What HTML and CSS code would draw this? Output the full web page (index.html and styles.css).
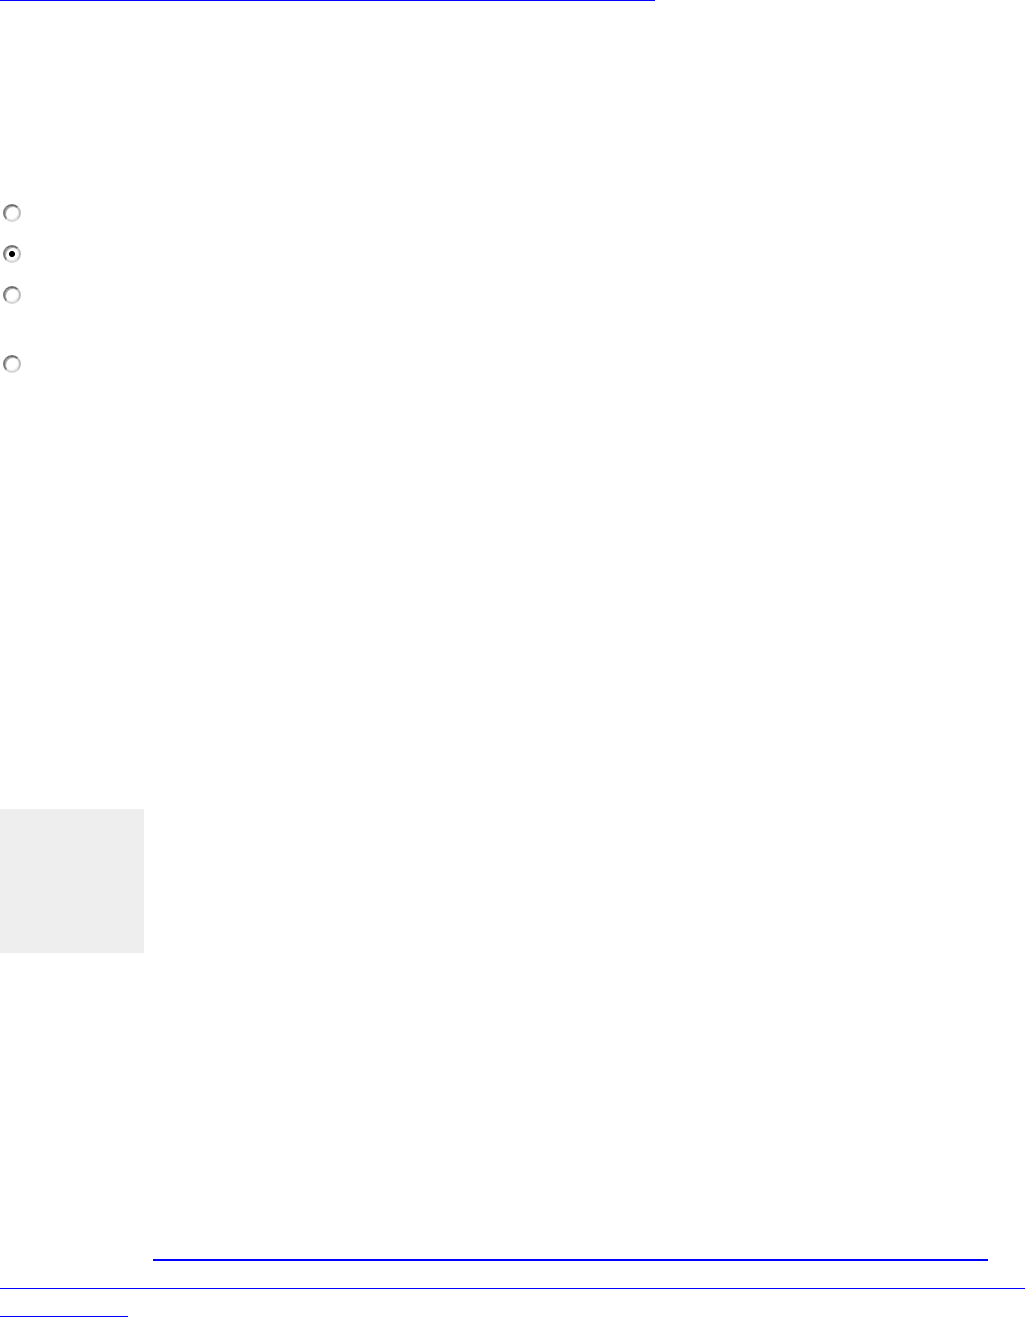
FILE: index.html
```html
<!DOCTYPE html>
<html>
<head>
<meta charset="utf-8">
<link rel="stylesheet" href="styles.css">
</head>
<body>
<div class="page">
  <a class="rule rule-top" href="#"></a>
  <form class="choices">
    <label class="choice"><input type="radio" name="opt" class="radio"></label>
    <label class="choice"><input type="radio" name="opt" class="radio" checked></label>
    <label class="choice"><input type="radio" name="opt" class="radio"></label>
    <label class="choice choice-far"><input type="radio" name="opt" class="radio"></label>
  </form>
  <div class="panel"></div>
  <a class="rule rule-mid" href="#"></a>
  <a class="rule rule-full" href="#"></a>
  <a class="rule rule-short" href="#"></a>
</div>
</body>
</html>
```
FILE: styles.css
```css
html, body {
  margin: 0;
  padding: 0;
  background: #ffffff;
  font-family: "Liberation Serif", serif;
}
.page {
  display: flex;
  flex-direction: column;
  align-items: flex-start;
}
.rule {
  display: block;
  background: #0000ff;
}
.rule-top {
  width: 655px;
  height: 1px;
}
.choices {
  margin: 203px 0 0 3px;
  display: flex;
  flex-direction: column;
  gap: 23px;
}
.choice {
  display: block;
  height: 18px;
}
.choice-far {
  margin-top: 28px;
}
.radio {
  -webkit-appearance: none;
  appearance: none;
  margin: 0;
  display: block;
  width: 18px;
  height: 18px;
  box-sizing: border-box;
  border-radius: 50%;
  border: 2px solid;
  border-color: #6f6f6f #bdbdbd #d6d6d6 #7a7a7a;
  background: #ffffff;
  box-shadow: inset 1px 1px 0 #a8a8a8, inset -1px -1px 0 #ececec;
}
.radio:checked {
  background: radial-gradient(circle, #000000 0, #000000 2.6px, #ffffff 3.4px);
}
.panel {
  margin-top: 436px;
  width: 144px;
  height: 144px;
  background: #eeeeee;
}
.rule-mid {
  margin: 306px 0 0 153px;
  width: 835px;
  height: 2px;
}
.rule-full {
  margin-top: 27px;
  width: 1025px;
  height: 1px;
}
.rule-short {
  margin-top: 27px;
  width: 128px;
  height: 1px;
}
```
